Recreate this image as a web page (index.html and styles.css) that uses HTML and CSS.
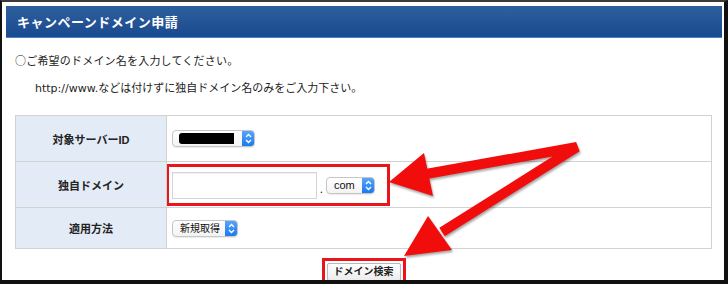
FILE: index.html
```html
<!DOCTYPE html>
<html lang="ja">

<head>
  <meta charset="UTF-8">
  <meta name="viewport" content="width=device-width, initial-scale=1.0">
  <link rel="stylesheet" href="styles.css">
</head>

<body>
  <div class="frame">
    <h2 class="panel-title">キャンペーンドメイン申請</h2>
    <div class="panel-body">
      <p class="lead">○ご希望のドメイン名を入力してください。</p>
      <p class="note">http://www.などは付けずに独自ドメイン名のみをご入力下さい。</p>

      <table class="form-table">
        <tr class="row-server">
          <th>対象サーバーID</th>
          <td>
            <div class="select select-server">
              <span class="redacted"></span>
              <span class="stepper">
                <svg width="13" height="17" viewBox="0 0 13 17"><path d="M4 7 L6.5 4.5 L9 7 M4 10 L6.5 12.5 L9 10" /></svg>
              </span>
            </div>
          </td>
        </tr>
        <tr class="row-domain">
          <th>独自ドメイン</th>
          <td class="domain-cell">
            <div class="mark mark-domain">
              <input class="text-input" type="text">
              <span class="dot">.</span>
              <div class="select select-tld">
                <span class="select-text">com</span>
                <span class="stepper">
                  <svg width="13" height="17" viewBox="0 0 13 17"><path d="M4 7 L6.5 4.5 L9 7 M4 10 L6.5 12.5 L9 10" /></svg>
                </span>
              </div>
            </div>
          </td>
        </tr>
        <tr class="row-method">
          <th>適用方法</th>
          <td>
            <div class="select select-method">
              <span class="select-text">新規取得</span>
              <span class="stepper">
                <svg width="13" height="17" viewBox="0 0 13 17"><path d="M4 7 L6.5 4.5 L9 7 M4 10 L6.5 12.5 L9 10" /></svg>
              </span>
            </div>
          </td>
        </tr>
      </table>

      <div class="actions">
        <span class="mark mark-btn"><button class="search-btn" type="button">ドメイン検索</button></span>
      </div>
    </div>

    <!-- annotation arrows -->
    <svg class="arrows" width="728" height="284" viewBox="0 0 728 284">
      <polyline points="426,174 577,147 442,232" />
      <polygon points="389,182 424,153 433,196" />
      <polygon points="404,256 428,216 452,250" />
    </svg>
  </div>
</body>

</html>
```

FILE: styles.css
```css
body {
  margin: 0;
  font-family: "Liberation Sans", "Noto Sans CJK JP", sans-serif;
  color: #222;
  background: #fff;
}

.frame {
  position: relative;
  width: 728px;
  height: 284px;
  box-sizing: border-box;
  border-top: 2px solid #3a3a3a;
  border-left: 2px solid #111;
  border-right: 4px solid #111;
  border-bottom: 4px solid #111;
  padding: 4px 2px 0 4px;
  overflow: hidden;
  background: #fff;
}

.panel-title {
  margin: 0;
  height: 32px;
  line-height: 32px;
  padding-left: 11px;
  font-family: "Noto Sans CJK JP", sans-serif;
  font-size: 13px;
  font-weight: bold;
  letter-spacing: 0.5px;
  color: #fff;
  background: linear-gradient(#2e5f9d, #1a4a8f);
  border-bottom: 1px solid #4f7fbf;
  box-sizing: border-box;
}

.panel-body {
  padding: 14px 10px 0 9px;
}

.lead {
  margin: 0;
  font-family: "Noto Sans CJK JP", sans-serif;
  font-size: 11px;
  line-height: 16px;
  letter-spacing: 0.2px;
}

.note {
  margin: 13px 0 0 20px;
  font-family: "DejaVu Sans", "Noto Sans CJK JP", sans-serif;
  font-size: 11px;
  line-height: 16px;
}

.form-table {
  width: 697px;
  margin-top: 18px;
  border-collapse: collapse;
}

.form-table th,
.form-table td {
  border: 1px solid #d2d2d2;
  padding: 0;
}

.form-table th {
  width: 150px;
  background: #e3ebf6;
  font-size: 11px;
  font-weight: bold;
  text-align: center;
  color: #222;
}

.form-table td {
  padding-left: 5px;
}

.row-server {
  height: 46px;
}

.row-domain {
  height: 46px;
}

.row-method {
  height: 41px;
}

.form-table td.domain-cell {
  padding: 0;
}

.select {
  display: flex;
  align-items: center;
  height: 17px;
  box-sizing: border-box;
  border: 1px solid #c6c6c6;
  border-radius: 4px;
  background: linear-gradient(#fff, #f3f3f3);
  box-shadow: 0 1px 1px rgba(0, 0, 0, 0.08);
  overflow: hidden;
}

.select-server {
  width: 83px;
}

.select-tld {
  width: 49px;
}

.select-method {
  width: 66px;
}

.select-text {
  flex: 1;
  padding-left: 7px;
  font-size: 10px;
  line-height: 15px;
  color: #111;
}

.select-tld .select-text {
  font-size: 11px;
}

.redacted {
  width: 55px;
  height: 11px;
  margin-left: 6px;
  background: #000;
  border-radius: 3px 0 0 3px;
}

.stepper {
  margin-left: auto;
  width: 13px;
  height: 17px;
  margin-top: -1px;
  margin-bottom: -1px;
  margin-right: -1px;
  background: linear-gradient(#5aa8fb, #1877ec);
  border-radius: 0 4px 4px 0;
}

.stepper svg {
  display: block;
}

.stepper path {
  fill: none;
  stroke: #fff;
  stroke-width: 1.4;
}

.mark {
  border: 3px solid #e8151b;
}

.mark-domain {
  display: flex;
  align-items: center;
  width: 224px;
  height: 42px;
  box-sizing: border-box;
  margin-left: -1px;
  padding: 2px 0 0 3px;
}

.text-input {
  width: 145px;
  height: 27px;
  box-sizing: border-box;
  margin: 0;
  border: 1px solid #d4d4d4;
  box-shadow: inset 0 1px 1px rgba(0, 0, 0, 0.06);
  background: #fff;
}

.dot {
  width: 9px;
  padding-top: 6px;
  font-size: 12px;
  text-align: center;
}

.actions {
  margin-top: 9px;
  text-align: center;
}

.mark-btn {
  display: inline-block;
  padding: 2px 2px 6px;
}

.search-btn {
  display: block;
  margin: 0;
  padding: 1px 6px;
  font-family: "Liberation Sans", "Noto Sans CJK JP", sans-serif;
  font-size: 10px;
  font-weight: bold;
  line-height: 14px;
  color: #222;
  border: 1px solid #b8b8b8;
  border-radius: 2px;
  background: linear-gradient(#fff, #ececec);
}

.arrows {
  position: absolute;
  top: -2px;
  left: -2px;
  pointer-events: none;
  filter: drop-shadow(1px 2px 1px rgba(0, 0, 0, 0.35));
}

.arrows polyline {
  fill: none;
  stroke: #f20d0d;
  stroke-width: 10;
  stroke-linejoin: miter;
}

.arrows polygon {
  fill: #f20d0d;
}
```
